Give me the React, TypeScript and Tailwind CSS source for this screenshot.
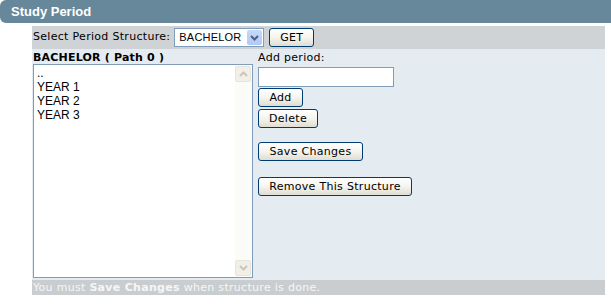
import React from "react";

const verdana = "font-['Verdana','DejaVu_Sans',sans-serif]";

function XpButton({ label, width }: { label: string; width: string }) {
  return (
    <button
      className={`${width} h-[19px] rounded-[3px] border border-[#003c74] bg-gradient-to-b from-white via-[#f5f4ee] to-[#e0ddd2] text-[11px] tracking-[0.3px] leading-none text-black flex items-center justify-center`}
    >
      {label}
    </button>
  );
}

function ScrollArrow({ up }: { up: boolean }) {
  return (
    <div className="w-[16px] h-[16px] rounded-[2px] border border-[#e6e4dc] bg-[#f1efe6] flex items-center justify-center">
      <svg width="9" height="6" viewBox="0 0 9 6">
        <path
          d={up ? "M1 5 L4.5 1.5 L8 5" : "M1 1 L4.5 4.5 L8 1"}
          fill="none"
          stroke="#c9c7ba"
          strokeWidth="2"
        />
      </svg>
    </div>
  );
}

export default function App() {
  const items = ["..", "YEAR 1", "YEAR 2", "YEAR 3"];

  return (
    <div className={`w-[611px] h-[304px] bg-white ${verdana}`}>
      {/* Header */}
      <div className="h-[23px] rounded-l-[6px] bg-[#67879a] flex items-center pl-[11px]">
        <span className="text-[13px] font-bold text-white font-['Tahoma','Liberation_Sans',sans-serif]">Study Period</span>
      </div>

      <div className="ml-[32px] mt-[3px] w-[573px]">
        {/* Select bar */}
        <div className="h-[23px] bg-[#cfd3d6] flex items-center pl-[1px] text-[11px] tracking-[0.3px] text-black">
          <span>Select Period Structure:</span>
          <div className="ml-[4px] w-[90px] h-[19px] bg-white border border-[#7f9db9] flex items-center justify-between pl-[4px] pr-[1px]">
            <span className="text-[11px] tracking-[0.2px] font-['Arial','Liberation_Sans',sans-serif]">BACHELOR</span>
            <div className="w-[15px] h-[15px] rounded-[2px] bg-gradient-to-b from-[#c6d8fb] to-[#b1c9f6] flex items-center justify-center">
              <svg width="9" height="6" viewBox="0 0 9 6">
                <path d="M1 1 L4.5 4.5 L8 1" fill="none" stroke="#4d6185" strokeWidth="2" />
              </svg>
            </div>
          </div>
          <div className="ml-[5px]">
            <XpButton label="GET" width="w-[45px]" />
          </div>
        </div>

        {/* Main panel */}
        <div className="h-[231px] bg-[#e4ecf2] flex">
          <div className="w-[221px] pl-[1px]">
            <div className="h-[15px] text-[11px] font-bold tracking-[0.2px] leading-[15px] pt-[1px]">BACHELOR ( Path 0 )</div>
            <div className="h-[214px] bg-white border border-[#7f9db9] flex">
              <div className="flex-1 pl-[3px] pt-[1px] text-[12px] leading-[14px] font-['Arial','Liberation_Sans',sans-serif]">
                {items.map((it) => (
                  <div key={it}>{it}</div>
                ))}
              </div>
              <div className="w-[17px] bg-[#fbfbf8] flex flex-col justify-between py-[1px]">
                <ScrollArrow up />
                <ScrollArrow up={false} />
              </div>
            </div>
          </div>

          <div className="ml-[5px] flex flex-col items-start text-[11px] tracking-[0.3px]">
            <div className="mt-[2px] h-[13px] leading-[13px]">Add period:</div>
            <div className="mt-[3px] w-[136px] h-[20px] bg-white border border-[#7f9db9]" />
            <div className="mt-[1px]">
              <XpButton label="Add" width="w-[45px]" />
            </div>
            <div className="mt-[2px]">
              <XpButton label="Delete" width="w-[60px]" />
            </div>
            <div className="mt-[14px]">
              <XpButton label="Save Changes" width="w-[105px]" />
            </div>
            <div className="mt-[16px]">
              <XpButton label="Remove This Structure" width="w-[154px]" />
            </div>
          </div>
        </div>

        {/* Footer note */}
        <div className="h-[15px] bg-[#c9cdd0] pl-[1px] text-[11px] tracking-[0.3px] leading-[15px] text-[#f6f6f6]">
          You must <b>Save Changes</b> when structure is done.
        </div>
      </div>
    </div>
  );
}
